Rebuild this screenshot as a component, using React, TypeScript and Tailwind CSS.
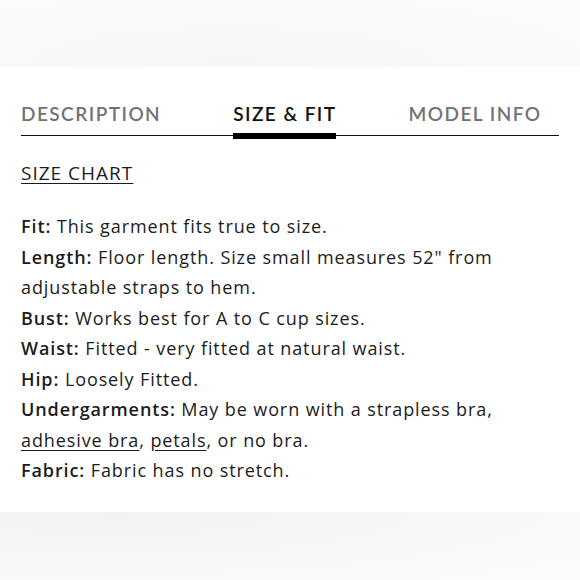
import React from 'react';

const tabs = ['DESCRIPTION', 'SIZE & FIT', 'MODEL INFO'];

const rows: { label: string; body: React.ReactNode }[] = [
  { label: 'Fit:', body: 'This garment fits true to size.' },
  { label: 'Length:', body: 'Floor length. Size small measures 52" from adjustable straps to hem.' },
  { label: 'Bust:', body: 'Works best for A to C cup sizes.' },
  { label: 'Waist:', body: 'Fitted - very fitted at natural waist.' },
  { label: 'Hip:', body: 'Loosely Fitted.' },
  {
    label: 'Undergarments:',
    body: (
      <>
        May be worn with a strapless bra, <a className="underline underline-offset-[3px]">adhesive bra</a>,{' '}
        <a className="underline underline-offset-[3px]">petals</a>, or no bra.
      </>
    ),
  },
  { label: 'Fabric:', body: 'Fabric has no stretch.' },
];

export default function App() {
  return (
    <div className="w-[580px] h-[580px] flex flex-col bg-white text-[#1c1c1c]">
      <div className="h-[67px] shrink-0 bg-[radial-gradient(ellipse_at_40%_100%,#f6f6f6,#fcfcfc)]" />
      <div className="flex-1 px-[21px] pt-[35px]">
        <div className="flex gap-[72px] border-b border-[#111] h-[34px] items-start font-['Lato',sans-serif]">
          {tabs.map((t) => (
            <div key={t} className="relative h-full">
              <span
                className={`text-[19px] leading-[24px] font-semibold tracking-[1.45px] ${
                  t === 'SIZE & FIT' ? 'text-[#111]' : 'text-[#727272]'
                }`}
              >
                {t}
              </span>
              {t === 'SIZE & FIT' && (
                <div className="absolute left-0 right-[1px] bottom-[-4px] h-[6px] bg-black" />
              )}
            </div>
          ))}
        </div>
        <div className="font-['Open_Sans',sans-serif] text-[18px] tracking-[0.9px]">
          <div className="mt-[25px] leading-[24px] text-[19px] tracking-[1px]">
            <a className="underline underline-offset-[3px]">SIZE CHART</a>
          </div>
          <div className="mt-[26px] leading-[30.5px]">
            {rows.map((r) => (
              <p key={r.label}>
                <span className="font-semibold">{r.label}</span> {r.body}
              </p>
            ))}
          </div>
        </div>
      </div>
      <div className="h-[68px] shrink-0 bg-[radial-gradient(ellipse_at_20%_0%,#f2f2f2,#fcfcfc)]" />
    </div>
  );
}
